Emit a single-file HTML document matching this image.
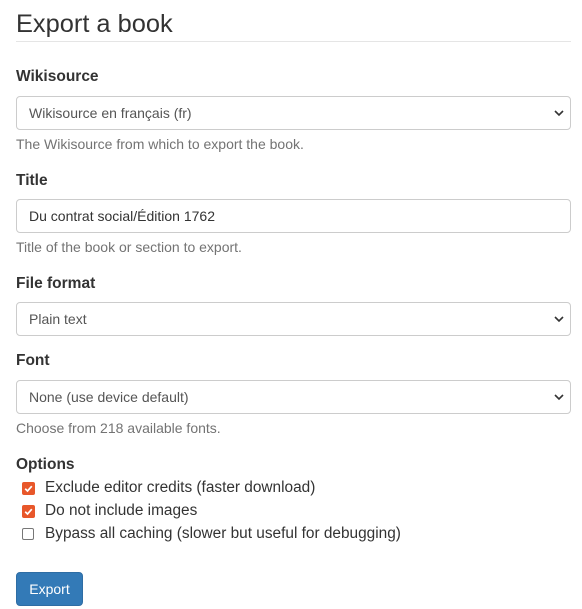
<!DOCTYPE html>
<html><head><meta charset="utf-8"><style>
body{margin:0;background:#fff;font-family:"Liberation Sans",sans-serif;color:#333;width:582px;height:609px;position:relative;overflow:hidden}
h1{position:absolute;left:16px;top:10px;margin:0;font-weight:400;font-size:25.4px;color:#333}
.hr{position:absolute;left:16px;right:11px;top:41px;border-top:1px solid #e5e5e5}
.lbl{position:absolute;left:16px;font-weight:bold;font-size:15.5px}
.box{position:absolute;left:16px;width:553px;height:32px;border:1px solid #ccc;border-radius:4px;box-sizing:content-box;font-size:14px;line-height:32px;color:#555}
.box span{position:absolute;left:12px}
.chev{position:absolute;right:6px;top:12px}
.help{position:absolute;left:16px;font-size:14px;color:#737373}
.cb{position:absolute;left:22px;width:13px;height:13px;border-radius:2px}
.on{background:#e8572a}
.off{border:1.5px solid #777;width:10px;height:10px;background:#fff}
.opt{position:absolute;left:45px;font-size:15.4px;color:#333}
.btn{position:absolute;left:16px;top:572px;width:67px;height:34px;background:#337ab7;border:1px solid #2e6da4;border-radius:4px;box-sizing:border-box;color:#fff;font-size:14px;line-height:32px;text-align:center}
</style></head><body>
<h1>Export a book</h1>
<div class="hr"></div>
<div class="lbl" style="top:68px">Wikisource</div>
<div class="box" style="top:96px"><span>Wikisource en français (fr)</span><svg class="chev" width="10" height="8" viewBox="0 0 10 8"><path d="M1 2l4 4 4-4" fill="none" stroke="#333" stroke-width="1.6"/></svg></div>
<div class="help" style="top:136px">The Wikisource from which to export the book.</div>
<div class="lbl" style="top:172px">Title</div>
<div class="box" style="top:199px"><span style="color:#333">Du contrat social/Édition 1762</span></div>
<div class="help" style="top:239px">Title of the book or section to export.</div>
<div class="lbl" style="top:275px">File format</div>
<div class="box" style="top:302px"><span>Plain text</span><svg class="chev" width="10" height="8" viewBox="0 0 10 8"><path d="M1 2l4 4 4-4" fill="none" stroke="#333" stroke-width="1.6"/></svg></div>
<div class="lbl" style="top:352px">Font</div>
<div class="box" style="top:380px"><span>None (use device default)</span><svg class="chev" width="10" height="8" viewBox="0 0 10 8"><path d="M1 2l4 4 4-4" fill="none" stroke="#333" stroke-width="1.6"/></svg></div>
<div class="help" style="top:420px">Choose from 218 available fonts.</div>
<div class="lbl" style="top:456px">Options</div>
<div class="cb on" style="top:482px"><svg width="13" height="13" viewBox="0 0 13 13"><path d="M3.2 6.8l2.3 2.2 4.3-4.8" fill="none" stroke="#fff" stroke-width="1.7"/></svg></div>
<div class="opt" style="top:479px">Exclude editor credits (faster download)</div>
<div class="cb on" style="top:505px"><svg width="13" height="13" viewBox="0 0 13 13"><path d="M3.2 6.8l2.3 2.2 4.3-4.8" fill="none" stroke="#fff" stroke-width="1.7"/></svg></div>
<div class="opt" style="top:502px">Do not include images</div>
<div class="cb off" style="top:528px"></div>
<div class="opt" style="top:525px">Bypass all caching (slower but useful for debugging)</div>
<div class="btn">Export</div>
</body></html>
